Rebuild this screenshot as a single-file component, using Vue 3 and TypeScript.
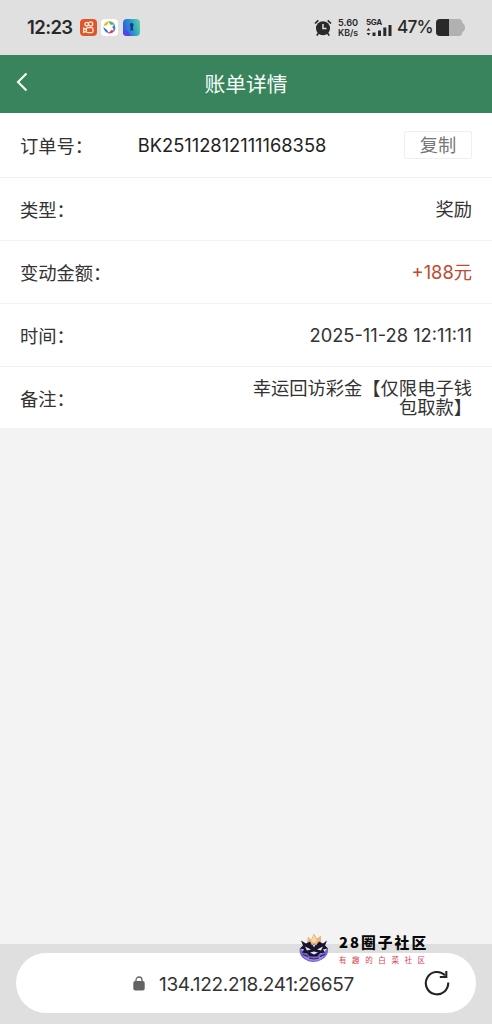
<script setup lang="ts">
interface Row {
  label: string
  value: string
  kind?: 'order' | 'amount' | 'date' | 'note'
}

const rows: Row[] = [
  { label: '订单号', value: 'BK25112812111168358', kind: 'order' },
  { label: '类型', value: '奖励' },
  { label: '变动金额', value: '+188元', kind: 'amount' },
  { label: '时间', value: '2025-11-28 12:11:11', kind: 'date' },
  { label: '备注', value: '幸运回访彩金【仅限电子钱包取款】', kind: 'note' },
]
</script>

<template>
  <div class="page" lang="zh-CN">
    <header class="status">
      <span class="clock">12:23</span>
      <svg class="app" viewBox="0 0 17 17">
        <rect width="17" height="17" rx="4" fill="#e2542c" />
        <g fill="none" stroke="#fff0dc" stroke-width="1.3">
          <circle cx="6.700" cy="5.200" r="1.800" />
          <circle cx="10.600" cy="5" r="2.100" />
          <rect x="6.400" y="8.700" width="6.600" height="5" rx="1.500" />
          <path d="M6.400 10.300 3.700 9.300v4L6.400 12.400" />
        </g>
      </svg>
      <svg class="app" viewBox="0 0 17 17">
        <rect width="17" height="17" rx="4" fill="#fff" />
        <path d="M2.500 7Q3.500 2.800 8 2.300L6 6.200Z" fill="#eab92e" />
        <path d="M7.500 2.300Q12 2 13.800 5.800L9.300 5.700Z" fill="#63b34b" />
        <path d="M13.300 5.300Q15.500 9 13.300 12.500L11.300 8Z" fill="#3c88cf" />
        <path d="M13.500 11.500Q11.500 15 7 14.300L10.500 11Z" fill="#d94155" />
        <path d="M8 14.300Q3 13.500 2.300 8L6 11Z" fill="#3f6fc9" />
      </svg>
      <svg class="app" viewBox="0 0 17 17">
        <defs>
          <linearGradient id="tile" x1="0" y1=".6" x2="1" y2=".3">
            <stop offset="0" stop-color="#3557e0" />
            <stop offset=".5" stop-color="#2795cd" />
            <stop offset="1" stop-color="#5ed0a4" />
          </linearGradient>
        </defs>
        <rect width="17" height="17" rx="4" fill="url(#tile)" />
        <path d="M0 12q5-2 8 5H4q-4 0-4-4Z" fill="#5545e2" />
        <circle cx="8.700" cy="6" r="1.900" fill="#153a86" />
        <path d="M7.700 7h2l.5 4.500h-3Z" fill="#153a86" />
      </svg>

      <div class="system">
        <svg class="alarm" viewBox="0 0 18 18">
          <path d="M1 4.500 4.300 1.300M17 4.500 13.700 1.300M4.500 14 2.800 16.600M13.500 14l1.700 2.600" fill="none" stroke="#292929" stroke-width="1.700" />
          <circle cx="9" cy="9.200" r="7" fill="#292929" />
          <path d="M9 5v4.600h3.500" fill="none" stroke="#e0e0e0" stroke-width="1.500" />
        </svg>
        <div class="speed"><span>5.60</span><span class="unit">KB/s</span></div>
        <div class="network">
          <span>5GA</span>
          <svg viewBox="0 0 26 12">
            <path d="m.5 5.500 2-2.500 2 2.500ZM.5 8h4l-2 2.500ZM6.500 7.500h3V11h-3ZM12 5.500h3V11h-3ZM17.300 2.500h3V11h-3ZM22.500 0h3v11h-3Z" fill="#292929" />
          </svg>
        </div>
        <span class="percent">47%</span>
        <svg class="battery" viewBox="0 0 29 17">
          <path d="M4 0h19q3 0 3.500 4 2.500 1 2.500 4.500T26.500 13q-.5 4-3.500 4H4q-4 0-4-4V4q0-4 4-4Z" fill="#b1b1b1" />
          <path d="M4 0h9v17H4q-4 0-4-4V4q0-4 4-4Z" fill="#292929" />
        </svg>
      </div>
    </header>

    <nav class="titlebar">
      <svg class="back" viewBox="0 0 12 20"><path d="M10.500 1.500 2 10l8.500 8.500" fill="none" stroke="#f4fff8" stroke-width="2.100" /></svg>
      <h1>账单详情</h1>
    </nav>

    <main>
      <section v-for="row in rows" :key="row.label" class="row">
        <span class="label">{{ row.label }}：</span>
        <span class="value" :class="row.kind">{{ row.value }}</span>
        <button v-if="row.kind === 'order'" class="copy">复制</button>
      </section>
    </main>

    <footer class="browser">
      <div class="address">
        <svg class="lock" viewBox="0 0 12 15">
          <path d="M3 6V4a3 3 0 0 1 6 0v2" fill="none" stroke="#646464" stroke-width="1.300" />
          <rect x=".3" y="5" width="11.400" height="9.500" rx="2" fill="#646464" />
        </svg>
        <span class="url">134.122.218.241:26657</span>
        <svg class="reload" viewBox="0 0 26 26">
          <path d="M24.200 12.500A11.200 11.200 0 1 1 21 5.300" fill="none" stroke="#242424" stroke-width="2.100" />
          <path d="M22.300 1v6h-6.500" fill="none" stroke="#242424" stroke-width="2.100" />
        </svg>
      </div>
    </footer>

    <aside class="community">
      <svg class="mascot" viewBox="0 0 30 30">
        <path d="M1 15q-2 8 5 12 8 5 17 0 7-4 6-12l-4 5q-10 5-20 0Z" fill="#7563cf" />
        <path d="M3 22q11 7 24 0-3 6-12 6.500Q6 28 3 22Z" fill="#9c85e6" />
        <path d="m8 10 1-6 3 3 3-6 3 5 4-3v7l-7 5Z" fill="#e5b778" />
        <path d="m12 8 3-5 3 5-3 3Z" fill="#f4d8a8" />
        <path d="m2 8 5 3 4-2 2 4 2-2 2 2 3-4 4 2 4-3-2 5 3 3-5 1 2 3-5 1-3 3h-7l-3-3-5-1 2-3-4-1 3-3Z" fill="#17152d" />
        <path d="m6 14 6 3-4 1ZM24 14l-6 3 4 1ZM11 20l4-1 4 1-4 2ZM13.500 12h3L15 15Z" fill="#e8e4f3" />
        <path d="m4 22 5 2m17-2-5 2M10 25.500l5 1 5-1" stroke="#302458" stroke-width="1.200" fill="none" />
      </svg>
      <div class="brand">
        <strong>28圈子社区</strong>
        <span>有趣的白菜社区</span>
      </div>
    </aside>
  </div>
</template>

<style>
body {
  background: #f3f3f3;
}
</style>

<style scoped>
.page {
  position: relative;
  display: flex;
  flex-direction: column;
  height: 1024px;
  overflow: hidden;
  background: #f3f3f3;
  color: #333;
  font-family: Inter, "Noto Sans CJK SC", sans-serif;
  font-size: 18.3px;
}
svg {
  display: block;
  flex: none;
}
.status {
  display: flex;
  align-items: center;
  box-sizing: border-box;
  height: 55px;
  padding: 0 27px;
  background: #e0e0e0;
  color: #292929;
}
.clock {
  width: 53px;
  margin-top: -1px;
  font-size: 18.500px;
  font-weight: 600;
  letter-spacing: -0.600px;
}
.app {
  width: 17px;
  height: 17px;
  margin-right: 4.300px;
}
.system {
  display: flex;
  align-items: center;
  margin-left: auto;
}
.alarm {
  width: 18px;
  height: 18px;
}
.speed {
  display: flex;
  flex-direction: column;
  width: 22px;
  margin-left: 6px;
  font-size: 9.200px;
  font-weight: 600;
  line-height: 9.500px;
  white-space: nowrap;
}
.unit {
  font-size: 8.800px;
}
.network {
  width: 26px;
  margin-left: 6px;
  font-size: 8px;
  font-weight: 700;
  line-height: 7px;
}
.network span {
  display: block;
  letter-spacing: -0.3px;
}
.network svg {
  width: 26px;
  height: 12px;
  margin-top: -1px;
}
.percent {
  width: 34px;
  margin: -2px 5px 0 5px;
  font-size: 17.300px;
  font-weight: 500;
  letter-spacing: -0.900px;
}
.battery {
  width: 29px;
  height: 17px;
}
.titlebar {
  position: relative;
  display: flex;
  align-items: center;
  justify-content: center;
  height: 58px;
  background: #39835d;
  color: #f4fff8;
}
.back {
  position: absolute;
  left: 16px;
  top: 17px;
  width: 12px;
  height: 20px;
}
.titlebar h1 {
  margin: -2px 0 0;
  font-size: 20.800px;
  font-weight: 400;
}
.row {
  display: flex;
  align-items: center;
  box-sizing: border-box;
  height: 63px;
  padding: 0 20px;
  border-bottom: 1px solid #f2f2f2;
  background: #fff;
}
.row:first-child {
  height: 65px;
}
.row:last-child {
  height: 61px;
  border: 0;
}
.label {
  flex: none;
  font-family: "Noto Sans CJK SC", sans-serif;
  line-height: 24px;
}
.row:not(:first-child):not(:last-child) .label {
  margin-top: -1px;
}
.value {
  margin-left: auto;
  line-height: 19px;
  text-align: right;
  white-space: nowrap;
}
.value.order {
  margin-left: 44.700px;
  color: #222;
}
.value.amount {
  color: #c0492f;
}
.value.note {
  width: 221px;
  white-space: normal;
}
.copy {
  width: 68px;
  height: 28px;
  margin-left: auto;
  padding: 0;
  border: 1px solid #efefef;
  border-radius: 2px;
  background: #fff;
  color: #777;
  font: inherit;
  line-height: 26px;
}
.browser {
  box-sizing: border-box;
  height: 80px;
  margin-top: auto;
  padding: 9px 16px 11px;
  background: #dfdfdf;
}
.address {
  display: flex;
  align-items: center;
  height: 60px;
  border-radius: 30px;
  background: #fff;
}
.lock {
  width: 12px;
  height: 15px;
  margin-left: 117px;
}
.url {
  width: 195px;
  margin: 2px 0 0 14px;
  font-size: 19px;
  letter-spacing: -0.300px;
  white-space: nowrap;
}
.reload {
  width: 26px;
  height: 26px;
  margin-left: 70px;
}
.community {
  position: absolute;
  left: 299px;
  top: 932px;
  display: flex;
}
.mascot {
  width: 30px;
  height: 31px;
}
.brand {
  display: flex;
  flex-direction: column;
  margin-left: 10px;
  white-space: nowrap;
}
.brand strong {
  color: #080808;
  font-family: "Noto Sans CJK SC", sans-serif;
  font-size: 14.800px;
  font-weight: 900;
  line-height: 20px;
  letter-spacing: 2px;
}
.brand span {
  color: #dc4254;
  font-family: "Noto Sans CJK SC", sans-serif;
  font-size: 7.500px;
  line-height: 15px;
  letter-spacing: 5.600px;
}
</style>
